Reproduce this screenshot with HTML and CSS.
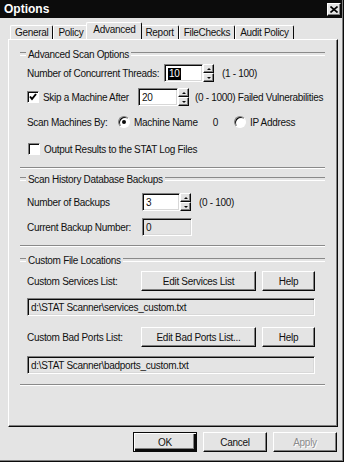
FILE: index.html
```html
<!DOCTYPE html>
<html lang="en">
<head>
    <meta charset="UTF-8">
    <title>Options</title>
    <link rel="stylesheet" href="styles.css">
</head>
<body>
    <div class="dialog">
        <div class="titlebar">
            <span class="title">Options</span>
            <span class="close">
                <svg width="8" height="7" viewBox="0 0 8 7"><path d="M0.5 0.5 L7.5 6.5 M7.5 0.5 L0.5 6.5" stroke="#000" stroke-width="1.6"/></svg>
            </span>
        </div>

        <div class="tabs">
            <span class="tab">General</span>
            <span class="tab">Policy</span>
            <span class="tab active">Advanced</span>
            <span class="tab">Report</span>
            <span class="tab">FileChecks</span>
            <span class="tab">Audit Policy</span>
        </div>

        <div class="panel">
            <div class="group scan-group">
                <div class="group-head"><span>Advanced Scan Options</span></div>

                <div class="row threads-row">
                    <span class="label threads-label">Number of Concurrent Threads:</span>
                    <span class="field edit threads-field"><span class="selected">10</span></span>
                    <span class="spinner"><span class="spin up"></span><span class="spin down"></span></span>
                    <span class="hint">(1 - 100)</span>
                </div>

                <div class="row skip-row">
                    <span class="checkbox">
                        <svg width="8" height="8" viewBox="0 0 8 8"><path d="M1 3.5 L3 6 L7 1" fill="none" stroke="#000" stroke-width="2"/></svg>
                    </span>
                    <span class="label skip-label">Skip a Machine After</span>
                    <span class="field edit skip-field">20</span>
                    <span class="spinner"><span class="spin up"></span><span class="spin down"></span></span>
                    <span class="hint">(0 - 1000) Failed Vulnerabilities</span>
                </div>

                <div class="row radio-row">
                    <span class="label">Scan Machines By:</span>
                    <span class="radio on"></span>
                    <span class="radio-text">Machine Name</span>
                    <span class="radio-zero">0</span>
                    <span class="radio"></span>
                    <span class="radio-text">IP Address</span>
                </div>

                <div class="row output-row">
                    <span class="checkbox"></span>
                    <span class="label">Output Results to the STAT Log Files</span>
                </div>
            </div>

            <div class="group backup-group">
                <div class="group-head"><span>Scan History Database Backups</span></div>

                <div class="row backups-row">
                    <span class="label backup-label">Number of Backups</span>
                    <span class="field edit backups-field">3</span>
                    <span class="spinner"><span class="spin up"></span><span class="spin down"></span></span>
                    <span class="hint">(0 - 100)</span>
                </div>

                <div class="row current-row">
                    <span class="label backup-label">Current Backup Number:</span>
                    <span class="field readonly current-field">0</span>
                </div>
            </div>

            <div class="group files-group">
                <div class="group-head"><span>Custom File Locations</span></div>

                <div class="row button-row">
                    <span class="label file-label">Custom Services List:</span>
                    <button class="btn edit-btn">Edit Services List</button>
                    <button class="btn help-btn">Help</button>
                </div>
                <div class="field readonly path-field">d:\STAT Scanner\services_custom.txt</div>

                <div class="row button-row">
                    <span class="label file-label">Custom Bad Ports List:</span>
                    <button class="btn edit-btn">Edit Bad Ports List...</button>
                    <button class="btn help-btn">Help</button>
                </div>
                <div class="field readonly path-field">d:\STAT Scanner\badports_custom.txt</div>
            </div>
        </div>

        <div class="actions">
            <button class="btn action-btn default">OK</button>
            <button class="btn action-btn">Cancel</button>
            <button class="btn action-btn disabled">Apply</button>
        </div>
    </div>
</body>
</html>
```

FILE: styles.css
```css
:root {
    --face: #e4e4e4;
    --shadow: #808080;
    --dark: #0a0a0a;
    --light: #ffffff;
    --etch: #8a8a8a;
}

* {
    box-sizing: border-box;
}

body, html {
    margin: 0;
    padding: 0;
    background: var(--face);
}

body {
    font-family: 'Liberation Sans', Arial, sans-serif;
    font-size: 10px;
    letter-spacing: -0.3px;
    color: #111;
}

.dialog {
    width: 344px;
    height: 462px;
    padding: 0 2px 2px 0;
    background: var(--face);
    box-shadow: inset -1px -1px 0 var(--dark), inset -2px -2px 0 var(--shadow);
}

/* title bar */

.titlebar {
    height: 18px;
    background: #0c0c0c;
    display: flex;
    align-items: center;
    justify-content: space-between;
    padding: 0 1px 0 4px;
}

.title {
    color: #fff;
    font-weight: bold;
    font-size: 12px;
    letter-spacing: 0;
}

.close {
    width: 14px;
    height: 13px;
    background: var(--face);
    border: 1px solid;
    border-color: var(--light) var(--dark) var(--dark) var(--light);
    box-shadow: inset -1px -1px 0 var(--shadow);
    display: flex;
    align-items: center;
    justify-content: center;
}

/* tabs */

.tabs {
    height: 21px;
    padding-left: 10px;
    display: flex;
    align-items: flex-end;
}

.tab {
    height: 14px;
    padding: 0 4px 0 4px;
    border-top: 1px solid var(--light);
    border-left: 1px solid var(--light);
    border-right: 1px solid var(--dark);
    border-radius: 2px 2px 0 0;
    line-height: 13px;
    white-space: nowrap;
}

.tab.active {
    height: 17px;
    margin: 0 -2px 0 -2px;
    padding: 0 6px 0 6px;
    background: var(--face);
    position: relative;
    z-index: 1;
    line-height: 13px;
}

/* tab page */

.panel {
    margin-left: 8px;
    width: 330px;
    height: 388px;
    padding: 0 12px 0 11px;
    border-top: 1px solid var(--light);
    border-left: 1px solid var(--light);
    border-right: 1px solid var(--dark);
    border-bottom: 1px solid var(--dark);
    box-shadow: inset -1px -1px 0 var(--shadow);
}

.group {
    padding-left: 7px;
    border-bottom: 1px solid var(--etch);
    box-shadow: 0 1px 0 var(--light);
}

.group-head {
    height: 12px;
    margin-left: -7px;
    display: flex;
    align-items: center;
}

.group-head::before,
.group-head::after {
    content: "";
    height: 2px;
    border-top: 1px solid var(--etch);
    border-bottom: 1px solid var(--light);
}

.group-head::before {
    width: 6px;
    margin-right: 2px;
}

.group-head::after {
    flex: 1;
    margin-left: 2px;
}

.scan-group {
    margin-top: 8px;
    padding-bottom: 11px;
}

.backup-group {
    margin-top: 5px;
    padding-bottom: 9px;
}

.files-group {
    margin-top: 8px;
    padding-bottom: 10px;
}

.row {
    display: flex;
    align-items: center;
}

.threads-row { margin-top: 4px; }
.skip-row { margin-top: 6px; }
.radio-row { margin-top: 9px; height: 14px; }
.output-row { margin-top: 13px; height: 14px; }
.backups-row { margin-top: 8px; }
.current-row { margin-top: 7px; }

.threads-label { width: 137px; }
.skip-label { width: 95px; }
.backup-label { width: 115px; }
.file-label { width: 114px; }

/* inputs */

.field {
    height: 18px;
    padding: 1px 3px 0 3px;
    display: flex;
    align-items: center;
    border: 1px solid;
    border-color: var(--shadow) var(--light) var(--light) var(--shadow);
    box-shadow: inset 1px 1px 0 var(--dark), inset -1px -1px 0 #d8d8d8;
    white-space: nowrap;
}

.field.edit {
    background: #fff;
}

.field.readonly {
    background: var(--face);
}

.threads-field { width: 39px; }
.skip-field { width: 40px; }
.backups-field { width: 38px; }
.current-field { width: 50px; }

.selected {
    background: #000;
    color: #fff;
    padding: 0 1px;
    line-height: 12px;
}

.spinner {
    width: 11px;
    height: 18px;
    display: flex;
    flex-direction: column;
}

.spin {
    flex: 1;
    display: flex;
    align-items: center;
    justify-content: center;
    border: 1px solid;
    border-color: var(--light) var(--dark) var(--dark) var(--light);
    box-shadow: inset -1px -1px 0 var(--shadow);
}

.spin::before {
    content: "";
    border-left: 2px solid transparent;
    border-right: 2px solid transparent;
}

.spin.up::before {
    border-bottom: 2px solid var(--dark);
}

.spin.down::before {
    border-top: 2px solid var(--dark);
}

.hint {
    margin-left: 8px;
    white-space: nowrap;
}

.threads-row .hint { margin-left: 8px; }
.skip-row .hint { margin-left: 6px; }

/* check and radio */

.checkbox {
    width: 12px;
    height: 12px;
    margin-right: 4px;
    background: #fff;
    border: 1px solid;
    border-color: var(--shadow) var(--light) var(--light) var(--shadow);
    box-shadow: inset 1px 1px 0 var(--dark);
    display: flex;
    align-items: center;
    justify-content: center;
}

.output-row .checkbox {
    margin-left: 1px;
}

.radio {
    width: 12px;
    height: 12px;
    border-radius: 50%;
    background: #fff;
    border: 1px solid;
    border-color: var(--shadow) var(--light) var(--light) var(--shadow);
    box-shadow: inset 1px 1px 0 var(--dark);
    display: flex;
    align-items: center;
    justify-content: center;
}

.radio.on::after {
    content: "";
    width: 4px;
    height: 4px;
    border-radius: 50%;
    background: var(--dark);
}

.radio-row .label {
    width: 91px;
}

.radio-text {
    margin-left: 4px;
}

.radio-zero {
    margin-left: 15px;
    margin-right: 16px;
}

/* buttons */

.btn {
    font-family: inherit;
    font-size: 10px;
    letter-spacing: -0.3px;
    color: #111;
    background: var(--face);
    border: 1px solid;
    border-color: var(--light) var(--dark) var(--dark) var(--light);
    box-shadow: inset -1px -1px 0 var(--shadow);
    padding: 0;
    margin: 0;
}

.button-row {
    height: 20px;
    margin-top: 5px;
}

.button-row + .path-field {
    margin-top: 7px;
}

.path-field + .button-row {
    margin-top: 11px;
}

.edit-btn {
    width: 115px;
    height: 20px;
}

.help-btn {
    width: 53px;
    height: 20px;
    margin-left: 6px;
}

.path-field {
    width: 288px;
}

.files-group .path-field:last-child {
    margin-top: 9px;
}

.actions {
    margin-top: 5px;
    padding-right: 5px;
    display: flex;
    justify-content: flex-end;
    gap: 6px;
}

.action-btn {
    width: 64px;
    height: 20px;
}

.action-btn.default {
    border: 1px solid var(--dark);
    box-shadow: inset 1px 1px 0 var(--light), inset -2px -2px 0 var(--dark), inset -3px -3px 0 var(--shadow);
}

.action-btn.disabled {
    color: #8c8c8c;
    text-shadow: 1px 1px 0 var(--light);
}
```
